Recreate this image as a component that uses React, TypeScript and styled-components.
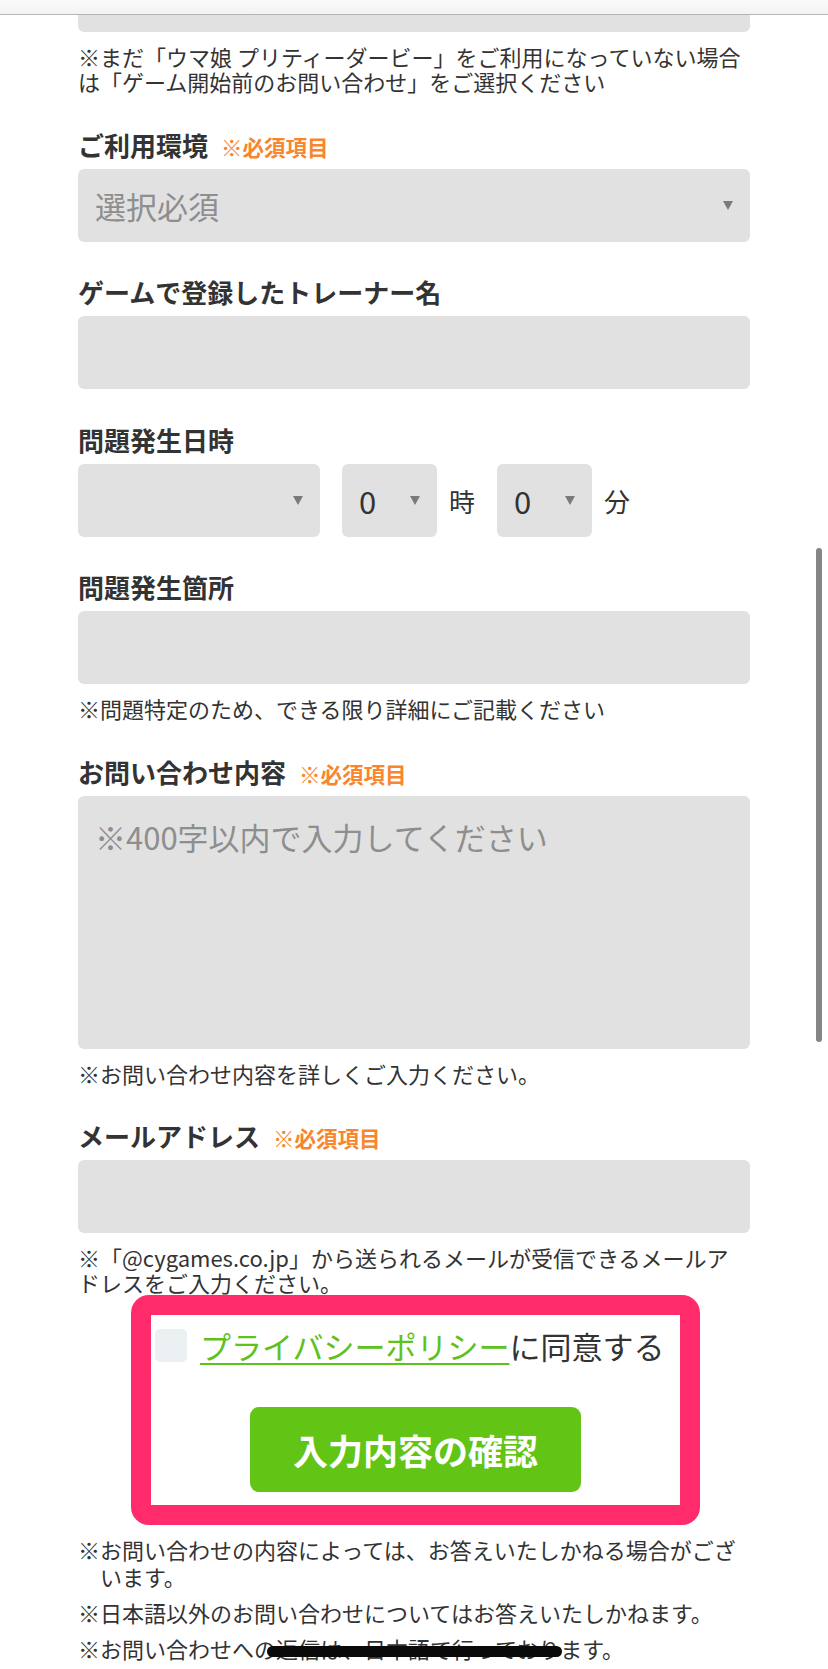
import styled, { createGlobalStyle } from "styled-components";

const GlobalStyle = createGlobalStyle`
    body {
        margin: 0;
        background: #fff;
        font-family: "Noto Sans CJK JP", "Noto Sans", sans-serif;
        color: #333;
    }
`;

const Screen = styled.div`
    position: relative;
    width: 828px;
    height: 1669px;
    overflow: hidden;
    background: #fff;
`;

const TopBar = styled.div`
    height: 14px;
    background: linear-gradient(#fbfbfb, #f3f3f3);
    border-bottom: 1px solid #b5b5b5;
`;

const Content = styled.main`
    padding: 0 78px;
`;

const CutBox = styled.div`
    height: 17px;
    background: #e1e1e1;
    border-radius: 0 0 6px 6px;
`;

const Note = styled.p`
    margin: 12px 0 0;
    font-size: 22px;
    line-height: 25px;
    color: #333;
`;

const Field = styled.section`
    margin-top: 32.5px;
`;

const Label = styled.div`
    display: flex;
    align-items: baseline;
    gap: 13px;
    height: 36px;
    margin-bottom: 6px;
    font-size: 26px;
    font-weight: 700;
    line-height: 36px;
    color: #333;
`;

const Required = styled.span`
    font-size: 21.5px;
    font-weight: 700;
    line-height: 36px;
    color: #f9852e;
`;

const InputBox = styled.div`
    height: 73px;
    background: #e1e1e1;
    border-radius: 6px;
`;

const Select = styled.div<{ $width?: number }>`
    display: flex;
    align-items: center;
    box-sizing: border-box;
    width: ${(p) => (p.$width ? `${p.$width}px` : "100%")};
    height: 73px;
    padding: 0 17px;
    flex: none;
    background: #e1e1e1;
    border-radius: 6px;
    font-size: 31px;
    color: #333;
`;

const Placeholder = styled.span`
    color: #8e8e8e;
`;

const Arrow = styled.span`
    margin-left: auto;
    width: 0;
    height: 0;
    border-left: 5px solid transparent;
    border-right: 5px solid transparent;
    border-top: 9px solid #7a7a7a;
`;

const TimeRow = styled.div`
    display: flex;
    align-items: center;
`;

const Spacer = styled.span`
    width: 22px;
`;

const Unit = styled.span<{ $last?: boolean }>`
    margin: 0 ${(p) => (p.$last ? 0 : 22)}px 0 12px;
    font-size: 26px;
    color: #333;
`;

const TextArea = styled.div`
    box-sizing: border-box;
    height: 253px;
    padding: 19px 17px;
    background: #e1e1e1;
    border-radius: 6px;
    font-size: 31px;
    line-height: 44px;
    color: #8e8e8e;
`;

const Highlight = styled.div`
    box-sizing: border-box;
    display: flex;
    flex-direction: column;
    align-items: center;
    width: 569px;
    height: 230px;
    margin-left: 53px;
    border: 20px solid #ff2b6b;
    border-radius: 18px;
`;

const AgreeRow = styled.label`
    align-self: flex-start;
    display: flex;
    align-items: center;
    gap: 13px;
    margin: 14px 0 0 4px;
    font-size: 31px;
    line-height: 33px;
    color: #333;
    white-space: nowrap;
`;

const Check = styled.span`
    flex: none;
    width: 32px;
    height: 33px;
    border-radius: 5px;
    background: #ebf0f3;
`;

const PolicyLink = styled.a`
    color: #5ec21a;
    text-decoration: underline;
    text-decoration-thickness: 2px;
    text-underline-offset: 4px;
`;

const SubmitButton = styled.button`
    margin-top: 45px;
    width: 331px;
    height: 85px;
    border: none;
    border-radius: 9px;
    background: #62c415;
    color: #fff;
    font-family: "Noto Sans CJK JP", sans-serif;
    font-size: 35px;
    font-weight: 700;
`;

const FootNotes = styled.ul`
    list-style: none;
    margin: 11px 0 0;
    padding: 0;
`;

const FootItem = styled.li`
    margin-bottom: 9px;
    padding-left: 22px;
    text-indent: -22px;
    font-size: 22px;
    line-height: 27px;
    color: #333;
`;

const Scrollbar = styled.div`
    position: absolute;
    top: 548px;
    right: 6px;
    width: 6px;
    height: 494px;
    border-radius: 3px;
    background: #858585;
`;

const HomeBar = styled.div`
    position: absolute;
    left: 267px;
    bottom: 12px;
    width: 295px;
    height: 11px;
    border-radius: 6px;
    background: #0a0a0a;
`;

const App = () => {
    return (
        <Screen>
            <GlobalStyle />
            <TopBar />
            <Content>
                <CutBox />
                <Note>
                    ※まだ「ウマ娘 プリティーダービー」をご利用になっていない場合は「ゲーム開始前のお問い合わせ」をご選択ください
                </Note>

                <Field>
                    <Label>
                        ご利用環境<Required>※必須項目</Required>
                    </Label>
                    <Select>
                        <Placeholder>選択必須</Placeholder>
                        <Arrow />
                    </Select>
                </Field>

                <Field>
                    <Label>ゲームで登録したトレーナー名</Label>
                    <InputBox />
                </Field>

                <Field>
                    <Label>問題発生日時</Label>
                    <TimeRow>
                        <Select $width={242}>
                            <Arrow />
                        </Select>
                        <Spacer />
                        <Select $width={95}>
                            0<Arrow />
                        </Select>
                        <Unit>時</Unit>
                        <Select $width={95}>
                            0<Arrow />
                        </Select>
                        <Unit $last>分</Unit>
                    </TimeRow>
                </Field>

                <Field>
                    <Label>問題発生箇所</Label>
                    <InputBox />
                    <Note>※問題特定のため、できる限り詳細にご記載ください</Note>
                </Field>

                <Field>
                    <Label>
                        お問い合わせ内容<Required>※必須項目</Required>
                    </Label>
                    <TextArea>※400字以内で入力してください</TextArea>
                    <Note>※お問い合わせ内容を詳しくご入力ください。</Note>
                </Field>

                <Field>
                    <Label>
                        メールアドレス<Required>※必須項目</Required>
                    </Label>
                    <InputBox />
                    <Note>
                        ※「@cygames.co.jp」から送られるメールが受信できるメールア
                        <br />
                        ドレスをご入力ください。
                    </Note>
                </Field>

                <Highlight>
                    <AgreeRow>
                        <Check />
                        <span>
                            <PolicyLink href="#">プライバシーポリシー</PolicyLink>に同意する
                        </span>
                    </AgreeRow>
                    <SubmitButton type="button">入力内容の確認</SubmitButton>
                </Highlight>

                <FootNotes>
                    <FootItem>※お問い合わせの内容によっては、お答えいたしかねる場合がございます。</FootItem>
                    <FootItem>※日本語以外のお問い合わせについてはお答えいたしかねます。</FootItem>
                    <FootItem>※お問い合わせへの返信は、日本語で行っております。</FootItem>
                </FootNotes>
            </Content>
            <Scrollbar />
            <HomeBar />
        </Screen>
    );
};

export default App;
